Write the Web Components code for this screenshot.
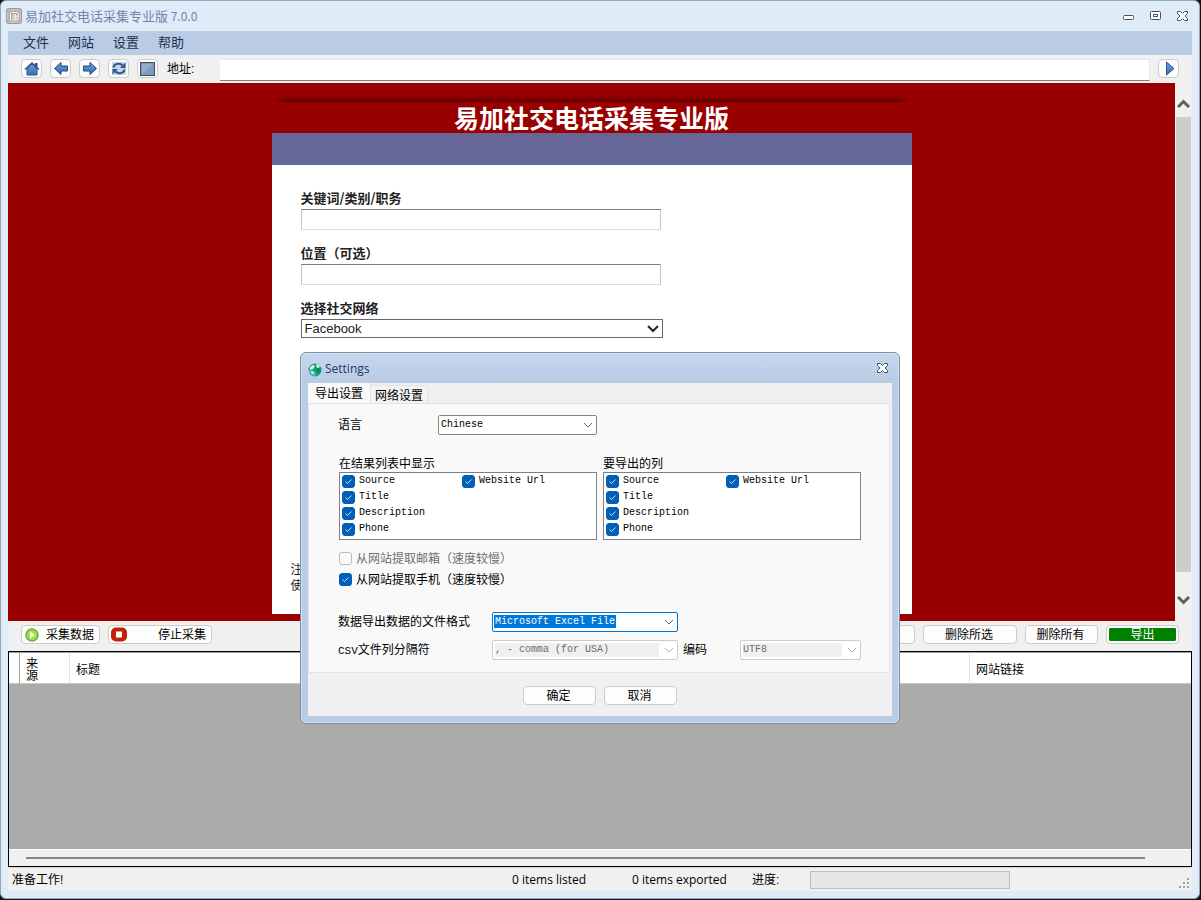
<!DOCTYPE html>
<html lang="zh-CN">
<head>
<meta charset="utf-8">
<title>易加社交电话采集专业版 7.0.0</title>
<style>
  html, body { height: 100%; margin: 0; }
  body {
    background: #14181d;
    font: 12px/16px "Liberation Sans", "Noto Sans CJK SC", sans-serif;
    color: #000;
  }
</style>
</head>
<body>
<app-window>
  <title-bar slot="title">易加社交电话采集专业版</title-bar>
  <menu-bar></menu-bar>
  <tool-bar></tool-bar>
  <web-view></web-view>
  <action-bar></action-bar>
  <results-grid></results-grid>
  <status-bar></status-bar>
  <settings-dialog slot="dialog"></settings-dialog>
</app-window>

<script>
const define = (name, html) => {
  const template = document.createElement('template');
  template.innerHTML = html;
  customElements.define(name, class extends HTMLElement {
    constructor() {
      super();
      this.attachShadow({ mode: 'open' }).append(template.content.cloneNode(true));
    }
  });
};

const closeIcon = `<svg width="11" height="10" viewBox="0 0 11 10" aria-hidden="true">
  <path d="M.5.5h3l2 2 2-2h3v2L8 5l2.500 2.500v2h-3l-2-2-2 2h-3v-2L3 5 .5 2.500z" fill="#fff" stroke="#4b5068"/></svg>`;

define('app-window', `
  <style>
    :host {
      display: flex; flex-direction: column; position: relative; box-sizing: border-box;
      height: calc(100% - 1px); margin-right: 1px;
      border: 1px solid #94a5b5; border-radius: 6px; background: #dfebf7;
    }
    main { flex: 1; min-height: 0; display: flex; flex-direction: column; margin: 0 7px 7px; background: #f0f0f0; }
  </style>
  <slot name="title"></slot>
  <main><slot></slot></main>
  <slot name="dialog"></slot>`);

define('title-bar', `
  <style>
    :host { display: flex; align-items: center; height: 30px; padding: 0 11px 0 5px; color: #7186ae; }
    h1 { flex: 1; margin: 0 0 0 3px; font: 13px/16px "Noto Sans CJK SC", sans-serif; }
    small { font-size: 12px; }
    button { display: grid; place-items: center; width: 27px; height: 20px; padding: 0; border: 0; background: none; }
    button:last-child { width: 11px; margin-left: 8px; }
  </style>
  <svg width="16" height="16" viewBox="0 0 16 16" aria-hidden="true">
    <rect width="16" height="16" rx="3" fill="#999"/>
    <rect x="1.500" y="1.500" width="13" height="13" rx="2" fill="#b4b4b4" stroke="#c8c8c8"/>
    <path d="M4.500 11V5.500l1-1H11l1 1V11l-1 1H5.500z" fill="#a2a2a2" stroke="#fff"/>
    <path d="M10.500 10.500c-2 .5-4 0-4-2s2-2.500 3.500-1.500v3M10 8.500c0-1-2-1-2 0s2 1 2 0" fill="none" stroke="#fff"/>
  </svg>
  <h1><slot></slot><small> 7.0.0</small></h1>
  <button aria-label="最小化"><svg width="11" height="10"><rect x=".5" y="4.500" width="10" height="4" rx="1" fill="#fff" stroke="#4b5068"/></svg></button>
  <button aria-label="最大化"><svg width="11" height="10"><rect x=".5" y=".5" width="10" height="8" rx="1" fill="#fff" stroke="#4b5068"/><rect x="3.500" y="3.500" width="4" height="2" fill="#fff" stroke="#4b5068"/></svg></button>
  <button aria-label="关闭">${closeIcon}</button>`);

define('menu-bar', `
  <style>
    :host { display: block; background: #b9cce4; }
    nav { display: flex; gap: 19px; height: 24px; padding-left: 15px; }
    a { font-size: 13px; line-height: 23px; color: #1e2f50; text-decoration: none; }
  </style>
  <nav><a href="#file">文件</a><a href="#site">网站</a><a href="#settings">设置</a><a href="#help">帮助</a></nav>`);

define('icon-button', `
  <style>
    :host { display: block; }
    button {
      display: grid; place-items: center; box-sizing: border-box; width: 21px; height: 19px; padding: 0;
      border: 1px solid #ccc; border-radius: 4px; background: #fdfdfd;
    }
  </style>
  <button><slot></slot></button>`);

define('tool-bar', `
  <style>
    :host { display: flex; gap: 8px; height: 24px; padding: 4px 13px 0; }
    svg { display: block; }
    label { margin-left: 1px; width: 45px; line-height: 20px; }
    input {
      flex: 1; min-width: 0; box-sizing: border-box; height: 22px; padding: 0 3px;
      border: solid #e6e6e6; border-width: 1px 1px 1px 0; border-bottom-color: #808080; background: #fff; outline: 0; font: inherit;
    }
  </style>
  <svg width="0" height="0" style="position:absolute" aria-hidden="true"><defs>
    <linearGradient id="b" x2="0" y2="1"><stop stop-color="#6f9fd0"/><stop offset="1" stop-color="#2f6db5"/></linearGradient>
  </defs></svg>
  <icon-button><svg width="16" height="15" viewBox="0 0 16 15" role="img" aria-label="主页">
    <path d="M11 2h2.500v4H11z" fill="#27548f"/><path d="M3 7.500 8 3l5 4.500V14H3z" fill="url(#b)" stroke="#2a5a98"/><path d="M1 8.500 8 2l7 6.500" fill="none" stroke="#27548f" stroke-width="1.500"/></svg></icon-button>
  <icon-button><svg width="16" height="15" viewBox="0 0 16 15" role="img" aria-label="后退">
    <path d="M1.500 7.500 8 1.500V5h6.500v5H8v3.500z" fill="url(#b)" stroke="#1f477f" stroke-linejoin="round"/></svg></icon-button>
  <icon-button><svg width="16" height="15" viewBox="0 0 16 15" role="img" aria-label="前进">
    <path d="M14.500 7.500 8 1.500V5H1.500v5H8v3.500z" fill="url(#b)" stroke="#1f477f" stroke-linejoin="round"/></svg></icon-button>
  <icon-button><svg width="16" height="15" viewBox="0 0 16 15" role="img" aria-label="刷新">
    <path d="M1 1h14v13H1z" fill="#c3d6ea"/>
    <path d="M2.500 6.500C3 2.500 9 1.500 11.500 4.500" fill="none" stroke="#2b578f" stroke-width="2"/><path d="M14.500 1.500v5.500H9z" fill="#2b578f"/>
    <path d="M13.500 8.500c-.5 4-6.500 5-9 2" fill="none" stroke="#2b578f" stroke-width="2"/><path d="M1.500 13.500V8H7z" fill="#2b578f"/></svg></icon-button>
  <icon-button><svg width="15" height="15" viewBox="0 0 15 15" role="img" aria-label="停止">
    <rect x=".5" y="1.500" width="14" height="13" fill="#7d9bbf" stroke="#3c4b60"/><path d="M2 13 13 3H2z" fill="#96aecb"/></svg></icon-button>
  <label for="address">地址:</label>
  <input id="address" type="text">
  <icon-button><svg width="16" height="15" viewBox="0 0 16 15" role="img" aria-label="转到">
    <path d="M5.500 1v13l7.500-6.500z" fill="url(#b)" stroke="#2a5a98"/></svg></icon-button>`);

define('web-view', `
  <style>
    :host { display: flex; flex: 1; min-height: 0; background: #f0f0f0; }
    .page { flex: 1; display: flex; flex-direction: column; padding: 13px 0 7px; background: #900; }
    article { flex: 1; display: flex; flex-direction: column; width: 640px; max-width: 100%; margin: 0 auto; }
    .shade {
      height: 6px; background: linear-gradient(transparent, #5c0000);
      mask-image: linear-gradient(90deg, transparent, #000 16px, #000 calc(100% - 16px), transparent);
    }
    h1 { margin: 0; height: 31px; font-size: 25px; line-height: 35px; text-align: center; color: #fff; white-space: nowrap; }
    .band { height: 32px; background: #669; }
    .card { flex: 1; display: flex; flex-direction: column; padding: 26px 19px 20px; background: #fff; }
    form { display: grid; justify-items: start; padding-left: 10px; font-size: 13px; }
    label { font: bold 13px/14px "Noto Sans CJK SC", sans-serif; margin-bottom: 4px; color: #222; }
    input {
      box-sizing: border-box; width: 360px; height: 21px; margin: 0 0 16px; padding: 0 2px; outline: 0;
      border: 1px solid; border-color: #7b7b7b #c4c4c4 #dcdcdc #c4c4c4; background: #fff;
    }
    select {
      appearance: none; box-sizing: border-box; width: 362px; height: 19px; padding: 0 3px; border: 1px solid #666; border-radius: 0;
      font: 13px "Liberation Sans", sans-serif; color: #222;
      background: #fff url("data:image/svg+xml,%3Csvg xmlns='http://www.w3.org/2000/svg' width='12' height='8'%3E%3Cpath d='M1 1l5 5 5-5' fill='none' stroke='%23222' stroke-width='2'/%3E%3C/svg%3E") no-repeat right 3px center;
    }
    p { margin: auto 0 0; font-size: 12px; line-height: 16px; color: #222; }
    .scroll { display: flex; flex-direction: column; align-items: center; width: 17px; padding: 16px 0; box-sizing: border-box; }
    .thumb { flex: 1; width: 15px; margin: 9px 0 24px; background: #cdcdcd; }
  </style>
  <div class="page"><article>
    <div class="shade"></div>
    <h1>易加社交电话采集专业版</h1>
    <div class="band"></div>
    <div class="card">
      <form>
        <label for="keyword">关键词/类别/职务</label><input id="keyword" type="text">
        <label for="place">位置（可选）</label><input id="place" type="text">
        <label for="network">选择社交网络</label><select id="network"><option>Facebook</option></select>
      </form>
      <p>注<br>使</p>
    </div>
  </article></div>
  <div class="scroll">
    <svg width="13" height="9" viewBox="0 0 13 9"><path d="M1 8l5.500-5.500L12 8" fill="none" stroke="#606060" stroke-width="3"/></svg>
    <div class="thumb"></div>
    <svg width="13" height="9" viewBox="0 0 13 9"><path d="M1 1l5.500 5.500L12 1" fill="none" stroke="#606060" stroke-width="3"/></svg>
  </div>`);

define('action-bar', `
  <style>
    :host { display: flex; gap: 8px; height: 26px; padding: 4px 13px 0; }
    button {
      display: flex; align-items: center; justify-content: center; box-sizing: border-box; width: 73px; height: 19px; padding: 0 2px 0 0;
      border: 1px solid #ccc; border-radius: 4px; background: #fdfdfd; font: inherit; line-height: 16px; color: #000;
    }
    .start { width: 79px; justify-content: space-between; padding: 0 5px 0 3px; }
    .stop { width: 104px; justify-content: space-between; padding: 0 5px 0 2px; }
    .wide { width: 94px; }
    .push { margin-left: auto; }
    .export { padding: 2px; background: #008000 content-box; box-shadow: inset 0 0 0 2px #fdfdfd; color: #fff; overflow: hidden; }
  </style>
  <button class="start"><svg width="14" height="14" viewBox="0 0 14 14" aria-hidden="true"><circle cx="7" cy="7" r="6" fill="#9be04a" stroke="#6fae3a" stroke-width="1.500"/><path d="M5 3.500v7L10 7z" fill="#fff"/></svg>采集数据</button>
  <button class="stop"><svg width="16" height="15" viewBox="0 0 16 15" aria-hidden="true"><rect y=".5" width="16" height="14" rx="5" fill="#c32105"/><rect x="5" y="4.500" width="6" height="6" fill="#fff"/></svg>停止采集</button>
  <button class="wide push" aria-label="更多"></button>
  <button class="wide">删除所选</button>
  <button>删除所有</button>
  <button class="export">导出</button>`);

define('results-grid', `
  <style>
    :host {
      display: flex; flex-direction: column; box-sizing: border-box; height: 216px;
      border: 1px solid #000; background: #ababab;
    }
    table { width: 100%; table-layout: fixed; border-collapse: separate; border-spacing: 0; border-top: 1px solid #a0a0a0; background: #fff; }
    th {
      box-sizing: border-box; height: 31px; padding: 3px 6px 0; border-right: 1px solid #e2e2e2; border-bottom: 1px solid #c8c8c8;
      font-weight: normal; line-height: 12px; text-align: left; vertical-align: middle;
    }
    th:last-child { border-right: 0; }
    .mark { width: 11px; padding: 0; border-right-color: #a0a0a0; }
    .source { width: 50px; padding-right: 30px; }
    .link { width: 221px; }
    .scroll { margin-top: auto; box-sizing: border-box; height: 17px; padding: 7px 46px 0 17px; border-top: 1px solid #fff; background: #f0f0f0; }
    .thumb { height: 2px; background: #858585; }
  </style>
  <table><thead><tr><th class="mark"></th><th class="source">来源</th><th>标题</th><th class="link">网站链接</th></tr></thead></table>
  <div class="scroll"><div class="thumb"></div></div>`);

define('status-bar', `
  <style>
    :host { display: flex; align-items: center; box-sizing: border-box; height: 24px; padding: 0 2px 0 4px; border-top: 1px solid #d7d7d7; }
    span { flex: none; width: 120px; }
    .state { width: 500px; }
    .count { font-family: "Open Sans", sans-serif; }
    label { width: 58px; }
    progress { appearance: none; box-sizing: border-box; width: 200px; height: 18px; border: 1px solid #bcbcbc; background: #e6e6e6; }
    progress::-webkit-progress-bar { background: #e6e6e6; }
    svg { margin: 8px 0 0 auto; }
  </style>
  <span class="state">准备工作!</span>
  <span class="count">0 items listed</span>
  <span class="count">0 items exported</span>
  <label for="progress">进度:</label>
  <progress id="progress" value="0" max="100"></progress>
  <svg width="11" height="11" viewBox="0 0 11 11" fill="#a0a0a0" aria-hidden="true"><path d="M8 0h2v2H8zM4 4h2v2H4zM8 4h2v2H8zM0 8h2v2H0zM4 8h2v2H4zM8 8h2v2H8z"/></svg>`);

define('check-item', `
  <style>
    :host { display: block; }
    label { display: flex; align-items: center; }
    input {
      appearance: none; flex: none; box-sizing: border-box; width: 13px; height: 13px; margin: 0 4px 0 0;
      border: 1px solid #bbb; border-radius: 3px; background: #fbfbfb;
    }
    input:checked {
      border-color: #005fb8;
      background: #005fb8 url("data:image/svg+xml,%3Csvg xmlns='http://www.w3.org/2000/svg' width='11' height='11'%3E%3Cpath d='M2.500 5.500l2 2 4-4' fill='none' stroke='%23cfe0f2'/%3E%3C/svg%3E");
    }
    :host([disabled]) { color: #6d6d6d; }
  </style>
  <label><input type="checkbox"><slot></slot></label>`);

define('column-list', `
  <style>
    :host { display: block; width: 258px; }
    .title { display: block; }
    .box {
      display: grid; grid-template: repeat(4, 16px) / 120px 1fr; grid-auto-flow: column; box-sizing: border-box; height: 68px;
      padding: 0 2px 2px; border: 1px solid #7a8089; background: #fff; font: 10px/16px "Liberation Mono", monospace;
    }
  </style>
  <span class="title"><slot></slot></span>
  <div class="box">
    <check-item checked>Source</check-item><check-item checked>Title</check-item>
    <check-item checked>Description</check-item><check-item checked>Phone</check-item>
    <check-item checked>Website Url</check-item>
  </div>`);

define('settings-dialog', `
  <style>
    :host {
      position: absolute; left: 299px; top: 351px; box-sizing: border-box; width: 600px; padding: 0 7px 7px;
      border: 1px solid #7d90a3; border-radius: 6px; background: linear-gradient(#c5d5ee, #b9cce4 30px);
      box-shadow: inset 0 0 0 1px #d3e1f2;
    }
    header { display: flex; align-items: center; height: 30px; padding-right: 4px; }
    h2 { flex: 1; margin: 2px 0 0 3px; font: 12px/16px "Open Sans", sans-serif; color: #1f3763; }
    header > svg { margin-top: 3px; }
    button { padding: 0; font: inherit; line-height: 16px; color: #000; }
    .close { display: grid; border: 0; background: none; }
    .client { background: #f0f0f0; }
    .tabs { display: flex; align-items: flex-end; height: 20px; }
    .tabs button { box-sizing: border-box; height: 18px; width: 57px; padding-top: 2px; border: solid #e3e3e3; border-width: 1px 1px 0 0; background: #f3f3f3; }
    .tabs .active { width: 63px; height: 20px; border-width: 0 1px 0 0; background: #f9f9f9; }
    .panel { padding: 11px 0 12px 29px; margin-right: 2px; border: 1px solid #e3e3e3; background: #f9f9f9; }
    .row { display: flex; align-items: center; height: 20px; }
    .row label { width: 154px; line-height: 18px; }
    .row .short { width: 100px; }
    .row .next { box-sizing: border-box; width: 62px; padding-left: 5px; }
    .lists, .checks { padding-left: 1px; }
    .lists { display: flex; gap: 6px; margin-top: 21px; }
    .checks { display: grid; grid-auto-rows: 21px; align-items: center; margin: 8px 0 22px; }
    .gap { margin-top: 8px; }
    b { font: 11px "Liberation Mono", monospace; }
    select {
      --arrow: url("data:image/svg+xml,%3Csvg xmlns='http://www.w3.org/2000/svg' width='10' height='6'%3E%3Cpath d='M1 1l4 4 4-4' fill='none' stroke='%23666'/%3E%3C/svg%3E") no-repeat right 3px center;
      appearance: none; box-sizing: border-box; width: 186px; height: 20px; padding: 0 2px 1px; outline: 0;
      border: 1px solid #858585; border-radius: 2px; background: var(--arrow), #fff; font: 10px "Liberation Mono", monospace; color: #000;
    }
    .language { width: 159px; }
    .format { border-color: #0078d7; color: #fff; background: var(--arrow), linear-gradient(#0078d7, #0078d7) no-repeat 1px 2px / 122px 13px, #fff; }
    select:disabled {
      --arrow: url("data:image/svg+xml,%3Csvg xmlns='http://www.w3.org/2000/svg' width='10' height='6'%3E%3Cpath d='M1 1l4 4 4-4' fill='none' stroke='%23b4b4b4'/%3E%3C/svg%3E") no-repeat right 3px center;
      border-color: #ccc; color: #6d6d6d; opacity: 1;
      background: var(--arrow), linear-gradient(#f0f0f0, #f0f0f0) no-repeat 2px 2px / calc(100% - 20px) 14px, #fff;
    }
    .encoding { width: 121px; }
    footer { display: flex; justify-content: center; gap: 8px; padding: 13px 0 11px; }
    footer button { box-sizing: border-box; width: 73px; height: 19px; padding: 0 2px 0 0; border: 1px solid #ccc; border-radius: 4px; background: #fdfdfd; }
  </style>
  <header>
    <svg width="14" height="14" viewBox="0 0 14 14" aria-hidden="true"><circle cx="7" cy="7" r="6.500" fill="#17a17b"/>
      <path d="M2 4 5 2l2 1-2 3-3 1zM8 1l3 1 1 2-3 1z" fill="#d8f3ea"/><path d="M1 7l4 1 3 3-1 2-3-1-3-3z" fill="#4fc7c9"/><path d="M8 6l3-1 2 3-3 3z" fill="#0d8a55"/><path d="M4 8l2 1-1 2-2-1z" fill="#eafaf6"/></svg>
    <h2>Settings</h2>
    <button class="close" aria-label="关闭">${closeIcon}</button>
  </header>
  <div class="client">
    <div class="tabs"><button class="active">导出设置</button><button>网络设置</button></div>
    <div class="panel">
      <div class="row"><label class="short" for="language">语言</label><select id="language" class="language"><option>Chinese</option></select></div>
      <div class="lists"><column-list>在结果列表中显示</column-list><column-list>要导出的列</column-list></div>
      <div class="checks">
        <check-item disabled>从网站提取邮箱（速度较慢）</check-item>
        <check-item checked>从网站提取手机（速度较慢）</check-item>
      </div>
      <div class="row"><label for="format">数据导出数据的文件格式</label><select id="format" class="format"><option>Microsoft Excel File</option></select></div>
      <div class="row gap"><label for="separator"><b>CSV</b>文件列分隔符</label><select id="separator" disabled><option>, - comma (for USA)</option></select>
        <label class="next" for="encoding">编码</label><select id="encoding" class="encoding" disabled><option>UTF8</option></select></div>
    </div>
    <footer><button>确定</button><button>取消</button></footer>
  </div>`);

/* Carry the checked and disabled attributes of each item over to its tick box. */
const syncChecks = root => root.querySelectorAll('*').forEach(el => {
  if (el.localName === 'check-item') {
    const box = el.shadowRoot.querySelector('input');
    box.checked = el.hasAttribute('checked');
    box.disabled = el.hasAttribute('disabled');
  }
  if (el.shadowRoot) syncChecks(el.shadowRoot);
});
syncChecks(document);
</script>
</body>
</html>
